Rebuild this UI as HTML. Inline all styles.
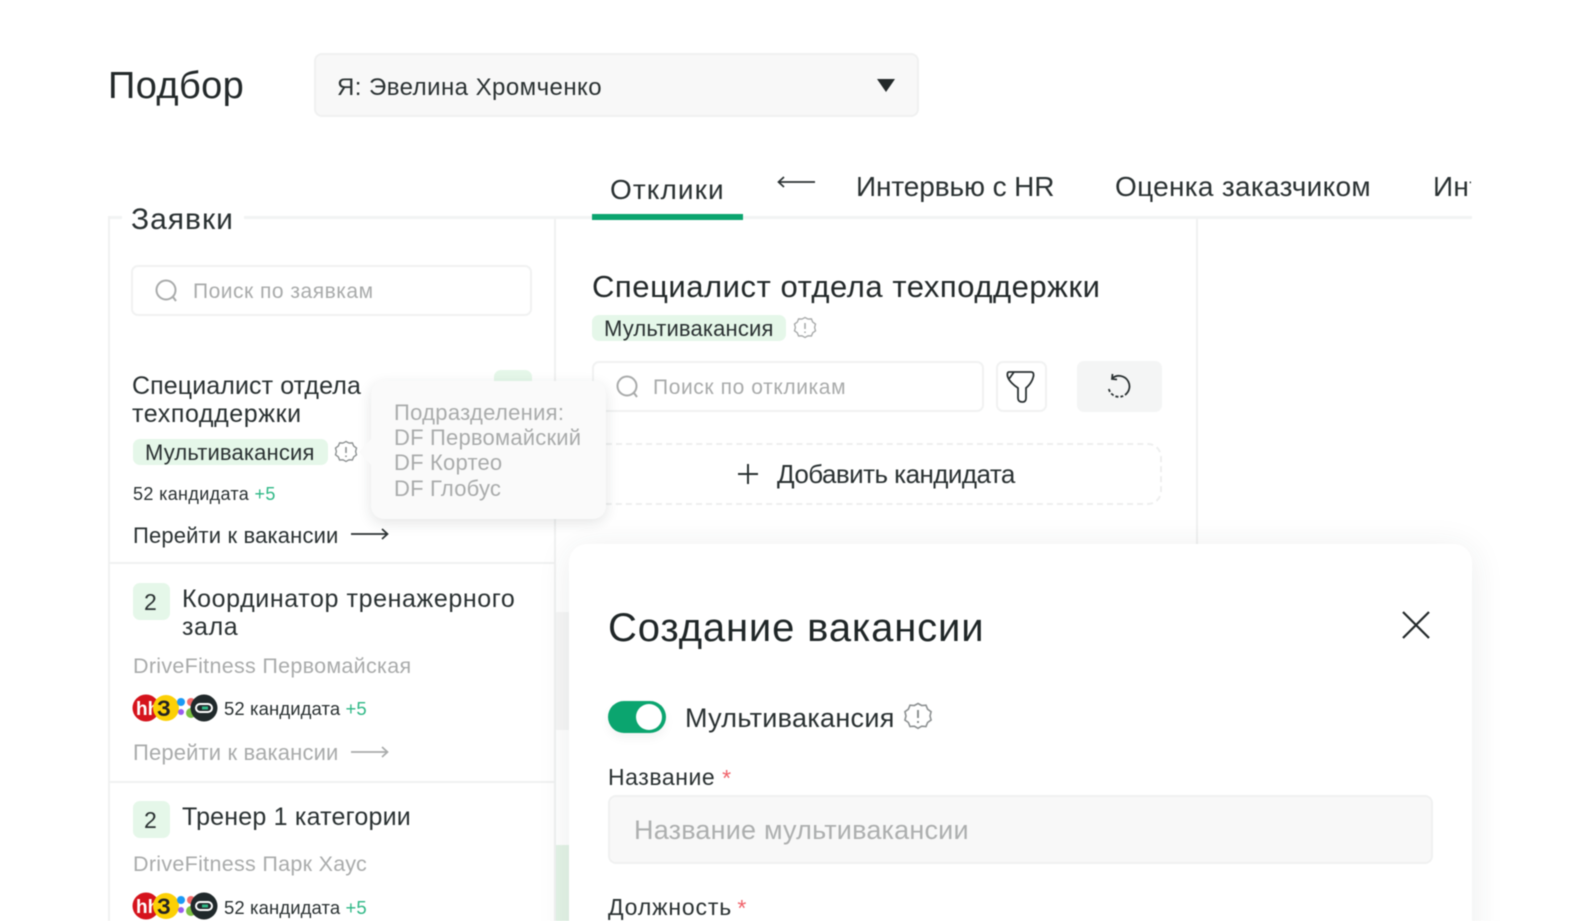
<!DOCTYPE html>
<html lang="ru"><head><meta charset="utf-8"><title>Подбор</title>
<style>
html,body{margin:0;padding:0;background:#fff}
body{width:1573px;height:921px;overflow:hidden;position:relative;font-family:"Liberation Sans","Noto Sans CJK SC",sans-serif;color:#2a3132}
#r{position:absolute;left:0;top:0;width:1573px;height:921px;filter:blur(.5px);overflow:hidden}
.t{position:absolute;white-space:nowrap;line-height:1}
.b{position:absolute;box-sizing:border-box}
.g{color:#a9abab}
.in{background:#fff;border:2px solid #f1f2f2;border-radius:7px}
.tag{background:#e5f7e9;border-radius:7px}
svg{position:absolute;overflow:visible}
.n{background:#e5f7e9;border-radius:7px;width:37px;height:37px}
</style></head><body><div id="r">

<div class="t" style="left:108px;top:67px;font-size:38px;letter-spacing:.4px;color:#23292a">Подбор</div>
<div class="b" style="left:314px;top:53px;width:605px;height:64px;background:#f8f8f8;border:2px solid #f0f1f1;border-radius:8px"></div>
<div class="t" style="left:337px;top:76px;font-size:24px;letter-spacing:.45px">Я: Эвелина Хромченко</div>
<svg style="left:877px;top:79px" width="18" height="14"><path d="M0 0H18L9 13Z" fill="#23292a"/></svg>

<div class="b" style="left:108px;top:216px;width:1364px;height:3px;background:#f2f3f3"></div>
<div class="b" style="left:108px;top:216px;width:2px;height:705px;background:#f0f1f1"></div>
<div class="b" style="left:122px;top:205px;width:122px;height:24px;background:#fff"></div>
<div class="t" style="left:131px;top:205px;font-size:30px;letter-spacing:1px">Заявки</div>
<div class="b" style="left:554px;top:219px;width:2px;height:702px;background:#f0f1f1"></div>
<div class="b" style="left:1196px;top:219px;width:2px;height:330px;background:#f0f1f1"></div>

<div class="t" style="left:610px;top:176px;font-size:28px;letter-spacing:1.1px">Отклики</div>
<div class="b" style="left:592px;top:214px;width:151px;height:6px;background:#0ba56f"></div>
<svg style="left:777px;top:174px" width="40" height="16" fill="none" stroke="#2a3132" stroke-width="1.7"><path d="M1 8H38M7 3L1.500 8L7 13"/></svg>
<div class="t" style="left:856px;top:173px;font-size:28px;letter-spacing:-.1px">Интервью с HR</div>
<div class="t" style="left:1115px;top:173px;font-size:28px;letter-spacing:.3px">Оценка заказчиком</div>
<div class="b" style="left:1433px;top:165px;width:38px;height:45px;overflow:hidden"><div class="t" style="left:0;top:8px;font-size:28px;letter-spacing:.3px">Интервью</div></div>

<div class="b in" style="left:131px;top:265px;width:401px;height:51px"></div>
<svg style="left:155px;top:279px" width="24" height="25" fill="none" stroke="#a9abab" stroke-width="2"><circle cx="11" cy="11" r="9.500"/><path d="M18 18L21 22"/></svg>
<div class="t g" style="left:193px;top:281px;font-size:21px;letter-spacing:.5px">Поиск по заявкам</div>

<div class="b" style="left:494px;top:370px;width:38px;height:30px;background:#e5f7e9;border-radius:7px"></div>
<div class="t" style="left:132px;top:374px;font-size:25px;letter-spacing:.1px">Специалист отдела</div>
<div class="t" style="left:132px;top:402px;font-size:25px;letter-spacing:.6px">техподдержки</div>
<div class="b tag" style="left:133px;top:439px;width:195px;height:26px"></div>
<div class="t" style="left:145px;top:442px;font-size:22px;letter-spacing:.15px">Мультивакансия</div>
<svg style="left:334px;top:440px" width="24" height="24" fill="none" stroke="#8d9192" stroke-width="1.400"><path d="M12 1.500l3 1.600 3.400-.2 1.300 3.200 2.800 2-.9 3.400.9 3.300-2.800 2-1.300 3.200-3.400-.2-3 1.700-3-1.700-3.400.2-1.300-3.200-2.800-2 .9-3.300-.9-3.400 2.800-2 1.300-3.200 3.400.2z"/><path d="M12 7v6M12 15.500v1.500" stroke-width="1.600"/></svg>
<div class="t" style="left:133px;top:485px;font-size:18px;letter-spacing:.35px">52 кандидата <span style="color:#2fb886">+5</span></div>
<div class="t" style="left:133px;top:525px;font-size:22px;letter-spacing:.15px">Перейти к вакансии</div>
<svg style="left:351px;top:527px" width="38" height="14" fill="none" stroke="#2a3132" stroke-width="1.700"><path d="M0 7H36M31 2L36.500 7L31 12"/></svg>

<div class="b" style="left:109px;top:562px;width:446px;height:2px;background:#f0f1f1"></div>
<div class="b n" style="left:133px;top:583px"></div>
<div class="t" style="left:144px;top:591px;font-size:23px">2</div>
<div class="t" style="left:182px;top:587px;font-size:25px;letter-spacing:.6px">Координатор тренажерного</div>
<div class="t" style="left:182px;top:615px;font-size:25px;letter-spacing:.6px">зала</div>
<div class="t g" style="left:133px;top:656px;font-size:21.500px;letter-spacing:.3px">DriveFitness Первомайская</div>

<svg style="left:132px;top:694px" width="90" height="28">
<circle cx="14" cy="14" r="13.500" fill="#d5131c"/><text x="4" y="21" font-family="Liberation Sans" font-size="19" font-weight="700" fill="#fff">hh</text>
<circle cx="34" cy="14" r="13" fill="#fcd005"/><text x="25" y="22" font-family="Liberation Sans" font-size="22" font-weight="700" fill="#222">З</text>
<circle cx="49" cy="8" r="4" fill="#1b9af5"/><circle cx="59" cy="8" r="4" fill="#f46a6a"/><circle cx="49" cy="18" r="3" fill="#9a5cf0"/><circle cx="59" cy="19" r="5" fill="#7cc243"/>
<circle cx="72" cy="14" r="13.500" fill="#20292b"/><rect x="64" y="10" width="16" height="8" rx="4" fill="none" stroke="#fff" stroke-width="2"/><rect x="70" y="12.500" width="6" height="3" fill="#2fb886"/></svg>
<div class="t" style="left:224px;top:700px;font-size:18.500px;letter-spacing:.1px">52 кандидата <span style="color:#2fb886">+5</span></div>
<div class="t g" style="left:133px;top:742px;font-size:22px;letter-spacing:.15px">Перейти к вакансии</div>
<svg style="left:351px;top:745px" width="38" height="14" fill="none" stroke="#a9abab" stroke-width="1.700"><path d="M0 7H36M31 2L36.500 7L31 12"/></svg>

<div class="b" style="left:109px;top:781px;width:446px;height:2px;background:#f0f1f1"></div>
<div class="b n" style="left:133px;top:801px"></div>
<div class="t" style="left:144px;top:809px;font-size:23px">2</div>
<div class="t" style="left:182px;top:805px;font-size:25px;letter-spacing:.2px">Тренер 1 категории</div>
<div class="t g" style="left:133px;top:854px;font-size:21.500px;letter-spacing:.3px">DriveFitness Парк Хаус</div>
<svg style="left:132px;top:892px" width="90" height="28">
<circle cx="14" cy="14" r="13.500" fill="#d5131c"/><text x="4" y="21" font-family="Liberation Sans" font-size="19" font-weight="700" fill="#fff">hh</text>
<circle cx="34" cy="14" r="13" fill="#fcd005"/><text x="25" y="22" font-family="Liberation Sans" font-size="22" font-weight="700" fill="#222">З</text>
<circle cx="49" cy="8" r="4" fill="#1b9af5"/><circle cx="59" cy="8" r="4" fill="#f46a6a"/><circle cx="49" cy="18" r="3" fill="#9a5cf0"/><circle cx="59" cy="19" r="5" fill="#7cc243"/>
<circle cx="72" cy="14" r="13.500" fill="#20292b"/><rect x="64" y="10" width="16" height="8" rx="4" fill="none" stroke="#fff" stroke-width="2"/><rect x="70" y="12.500" width="6" height="3" fill="#2fb886"/></svg>
<div class="t" style="left:224px;top:899px;font-size:18.500px;letter-spacing:.1px">52 кандидата <span style="color:#2fb886">+5</span></div>

<div class="t" style="left:592px;top:271px;font-size:31px;letter-spacing:.55px;color:#23292a">Специалист отдела техподдержки</div>
<div class="b tag" style="left:592px;top:315px;width:194px;height:26px"></div>
<div class="t" style="left:604px;top:318px;font-size:22px;letter-spacing:.15px">Мультивакансия</div>
<svg style="left:793px;top:316px" width="24" height="24" fill="none" stroke="#a9abab" stroke-width="1.400"><path d="M12 1.500l3 1.600 3.400-.2 1.300 3.200 2.800 2-.9 3.400.9 3.300-2.800 2-1.300 3.200-3.400-.2-3 1.700-3-1.700-3.400.2-1.300-3.200-2.800-2 .9-3.300-.9-3.400 2.800-2 1.300-3.200 3.400.2z"/><path d="M12 7v6M12 15.500v1.500" stroke-width="1.600"/></svg>
<div class="b in" style="left:592px;top:361px;width:392px;height:51px"></div>
<svg style="left:616px;top:375px" width="24" height="25" fill="none" stroke="#a9abab" stroke-width="2"><circle cx="11" cy="11" r="9.500"/><path d="M18 18L21 22"/></svg>
<div class="t g" style="left:653px;top:377px;font-size:21px;letter-spacing:.6px">Поиск по откликам</div>
<div class="b in" style="left:996px;top:361px;width:51px;height:51px"></div>
<svg style="left:1006px;top:370px" width="30" height="34" fill="none" stroke="#2a3132" stroke-width="1.800" stroke-linejoin="round"><path d="M3 2H25Q28 2 27.500 6Q26 13 20 18V28Q20 32 16.500 32Q12 32 12 28V18Q3 12 1.500 6Q1 2 3 2ZM8 2L3 9"/></svg>
<div class="b" style="left:1077px;top:361px;width:85px;height:51px;background:#f4f5f5;border-radius:7px"></div>
<svg style="left:1105px;top:373px" width="28" height="28" fill="none" stroke="#2a3132" stroke-width="1.800"><path d="M7 5.500A10.500 10.500 0 1 1 3.500 14" stroke-dasharray="34 2 3 2 3 2 3 2 3"/><path d="M7.500 1L7 6L12 6.500"/></svg>

<div class="b" style="left:592px;top:443px;width:570px;height:62px;border:2px dashed #eeefef;border-radius:14px"></div>
<svg style="left:737px;top:463px" width="22" height="22" stroke="#2a3132" stroke-width="2"><path d="M11 1V21M1 11H21"/></svg>
<div class="t" style="left:777px;top:461px;font-size:26px;letter-spacing:-.55px">Добавить кандидата</div>

<div class="b" style="left:556px;top:612px;width:13px;height:118px;background:#f6f6f6"></div>
<div class="b" style="left:556px;top:845px;width:13px;height:76px;background:#e3f3e6"></div>
<div class="b" style="left:569px;top:544px;width:903px;height:420px;background:#fff;border-radius:18px;box-shadow:0 4px 34px rgba(40,50,50,.09)"></div>

<div class="b" style="left:371px;top:381px;width:235px;height:138px;background:#fafafa;border-radius:13px;box-shadow:0 4px 14px rgba(30,40,40,.12)"></div>
<svg style="left:358px;top:438px" width="16" height="28"><path d="M14 0L1 14L14 28Z" fill="#fafafa"/></svg>
<div class="t g" style="left:394px;top:402px;font-size:22px;letter-spacing:.3px">Подразделения:</div>
<div class="t g" style="left:394px;top:427px;font-size:22px;letter-spacing:.2px">DF Первомайский</div>
<div class="t g" style="left:394px;top:452px;font-size:22px;letter-spacing:.2px">DF Кортео</div>
<div class="t g" style="left:394px;top:478px;font-size:22px;letter-spacing:.2px">DF Глобус</div>

<div class="t" style="left:608px;top:608px;font-size:40px;letter-spacing:.85px;color:#1f2627">Создание вакансии</div>
<svg style="left:1401px;top:610px" width="30" height="30" stroke="#23292a" stroke-width="2.200"><path d="M2 2L28 28M28 2L2 28"/></svg>
<div class="b" style="left:608px;top:701px;width:58px;height:32px;background:#0ba56f;border-radius:16px;box-shadow:0 5px 10px rgba(0,0,0,.05)"></div>
<div class="b" style="left:636px;top:704px;width:26px;height:26px;background:#fff;border-radius:50%"></div>
<div class="t" style="left:685px;top:705px;font-size:27px;letter-spacing:.3px">Мультивакансия</div>
<svg style="left:903px;top:702px" width="30" height="30" fill="none" stroke="#8d9192" stroke-width="1.600"><path d="M15 1.500l3.700 2 4.300-.3 1.600 4 3.500 2.500-1.100 4.300 1.100 4-3.500 2.500-1.600 4-4.300-.3-3.700 2.100-3.700-2.100-4.300.3-1.600-4-3.500-2.500 1.100-4-1.100-4.300 3.500-2.500 1.600-4 4.300.3z"/><path d="M15 8v8M15 19v2" stroke-width="2"/></svg>
<div class="t" style="left:608px;top:766px;font-size:23px;letter-spacing:.55px">Название <span style="color:#f0626a;position:relative;top:1px">*</span></div>
<div class="b" style="left:608px;top:795px;width:825px;height:69px;background:#f8f8f8;border:2px solid #f0f1f1;border-radius:8px"></div>
<div class="t" style="left:634px;top:817px;font-size:27px;letter-spacing:.2px;color:#adafaf">Название мультивакансии</div>
<div class="t" style="left:608px;top:896px;font-size:23px;letter-spacing:.85px">Должность <span style="color:#f0626a;position:relative;top:1px;margin-left:-2px">*</span></div>

</div></body></html>
